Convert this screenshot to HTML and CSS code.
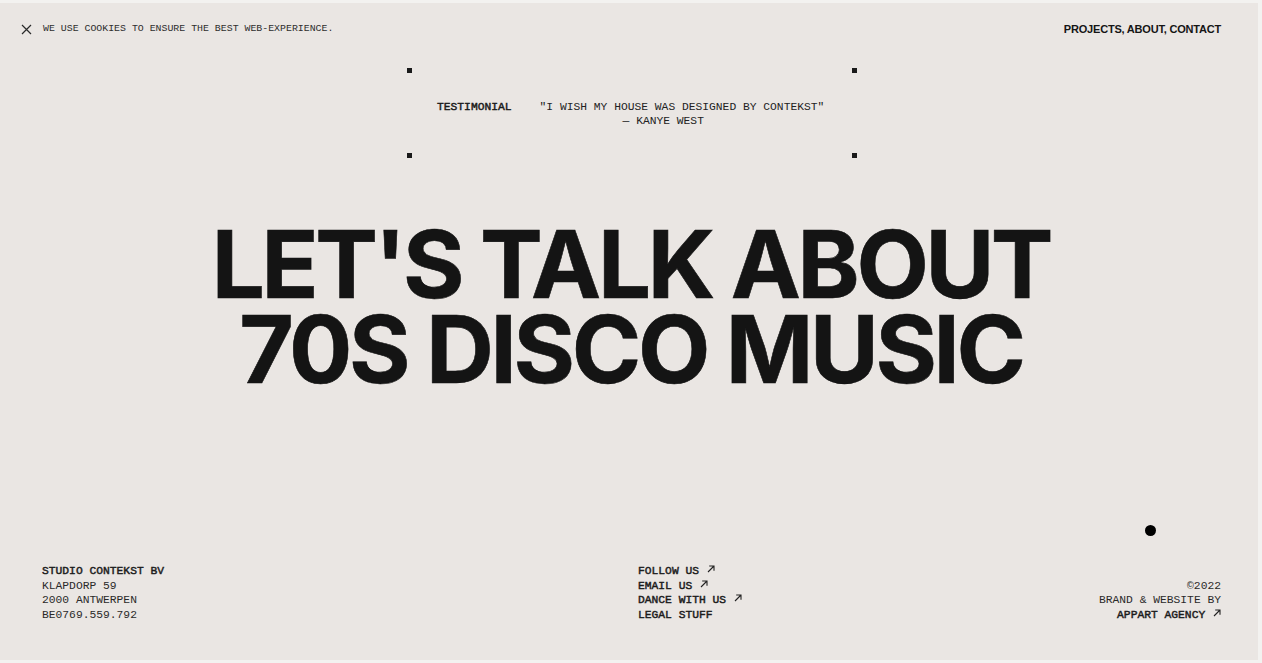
FILE: index.html
```html
<!DOCTYPE html>
<html lang="en">
<head>
<meta charset="utf-8">
<title>Contekst — Contact</title>
<link rel="stylesheet" href="styles.css">
</head>
<body>
<div class="page">
  <header class="topbar">
    <div class="cookie">
      <svg class="close" width="11" height="11" viewBox="0 0 11 11" aria-hidden="true"><path d="M1 1L10 10M10 1L1 10" stroke="#2a2a2a" stroke-width="1.2" fill="none"/></svg>
      <span>WE USE COOKIES TO ENSURE THE BEST WEB-EXPERIENCE.</span>
    </div>
    <nav class="nav">PROJECTS, ABOUT, CONTACT</nav>
  </header>

  <section class="testimonial">
    <span class="corner tl"></span><span class="corner tr"></span>
    <span class="corner bl"></span><span class="corner br"></span>
    <div class="t-label">TESTIMONIAL</div>
    <div class="t-quote">
      <div>"I WISH MY HOUSE WAS DESIGNED BY CONTEKST"</div>
      <div class="t-author">— KANYE WEST</div>
    </div>
  </section>

  <h1 class="headline">
    <span class="hl-line">LET'S TALK ABOUT</span>
    <span class="hl-line">70S DISCO MUSIC</span>
  </h1>

  <footer class="footer">
    <div class="col">
      <div class="strong">STUDIO CONTEKST BV</div>
      <div>KLAPDORP 59</div>
      <div>2000 ANTWERPEN</div>
      <div>BE0769.559.792</div>
    </div>
    <div class="col links">
      <div class="strong">FOLLOW US <svg class="arr" width="8" height="8" viewBox="0 0 8 8"><path d="M1 7L7 1M2.2 1H7V5.8" stroke="#222" stroke-width="1.1" fill="none"/></svg></div>
      <div class="strong">EMAIL US <svg class="arr" width="8" height="8" viewBox="0 0 8 8"><path d="M1 7L7 1M2.2 1H7V5.8" stroke="#222" stroke-width="1.1" fill="none"/></svg></div>
      <div class="strong">DANCE WITH US <svg class="arr" width="8" height="8" viewBox="0 0 8 8"><path d="M1 7L7 1M2.2 1H7V5.8" stroke="#222" stroke-width="1.1" fill="none"/></svg></div>
      <div class="strong">LEGAL STUFF</div>
    </div>
    <div class="col right">
      <div>©2022</div>
      <div>BRAND &amp; WEBSITE BY</div>
      <div class="strong">APPART AGENCY <svg class="arr" width="8" height="8" viewBox="0 0 8 8"><path d="M1 7L7 1M2.2 1H7V5.8" stroke="#222" stroke-width="1.1" fill="none"/></svg></div>
    </div>
  </footer>

  <span class="cursor"></span>
</div>
</body>
</html>
```

FILE: styles.css
```css
html, body {
  margin: 0;
  padding: 0;
  background: #f3f2f0;
  overflow: hidden;
}

.page {
  position: relative;
  box-sizing: border-box;
  height: 657px;
  margin: 3px 0;
  background: #eae6e3;
  box-shadow: inset -4px 0 0 #f3f2f0;
  color: #2a2a2a;
  font-family: "Liberation Mono", "DejaVu Sans Mono", monospace;
  font-size: 11.3px;
  line-height: 14.4px;
  display: flex;
  flex-direction: column;
}

.topbar {
  height: 52px;
  padding: 0 41px 0 21px;
  display: flex;
  align-items: center;
  justify-content: space-between;
}

.cookie {
  display: flex;
  align-items: center;
  gap: 11px;
  font-size: 9.9px;
  color: #2e2e2e;
}

.close {
  display: block;
}

.nav {
  font-family: "Liberation Sans", Arial, sans-serif;
  font-weight: 700;
  font-size: 11px;
  letter-spacing: -0.2px;
  color: #151515;
}

.testimonial {
  position: relative;
  width: 450px;
  height: 90px;
  margin: 13px auto 0;
  box-sizing: border-box;
  padding: 2px 0 0 31px;
  display: flex;
  align-items: center;
  gap: 28px;
  color: #222;
}

.corner {
  position: absolute;
  width: 5px;
  height: 5px;
  background: #1a1a1a;
}
.corner.tl { left: 1px; top: 0; }
.corner.tr { right: -1px; top: 0; }
.corner.bl { left: 1px; bottom: 0; }
.corner.br { right: -1px; bottom: 0; }

.t-label {
  -webkit-text-stroke: 0.45px #1a1a1a;
  margin-top: -14px;
  color: #1a1a1a;
}

.t-author {
  padding-left: 83px;
}

.headline {
  margin: 64px 0 0;
  text-align: center;
  font-family: Inter, "Liberation Sans", Arial, sans-serif;
  font-weight: 700;
  font-size: 94px;
  line-height: 85px;
  letter-spacing: -0.036em;
  color: #141414;
  -webkit-text-stroke: 0.6px #141414;
}

.hl-line {
  display: block;
  height: 85px;
}

.footer {
  margin-top: auto;
  padding: 0 41px 38px 42px;
  display: grid;
  grid-template-columns: 596px 1fr auto;
  align-items: end;
}

.col .strong {
  -webkit-text-stroke: 0.45px #1c1c1c;
  color: #1c1c1c;
}

.col.right {
  text-align: right;
}

.arr {
  display: inline-block;
  vertical-align: 1px;
  margin-left: 1px;
}

.cursor {
  position: absolute;
  left: 1145px;
  top: 522px;
  width: 11px;
  height: 11px;
  border-radius: 50%;
  background: #000;
}
```
